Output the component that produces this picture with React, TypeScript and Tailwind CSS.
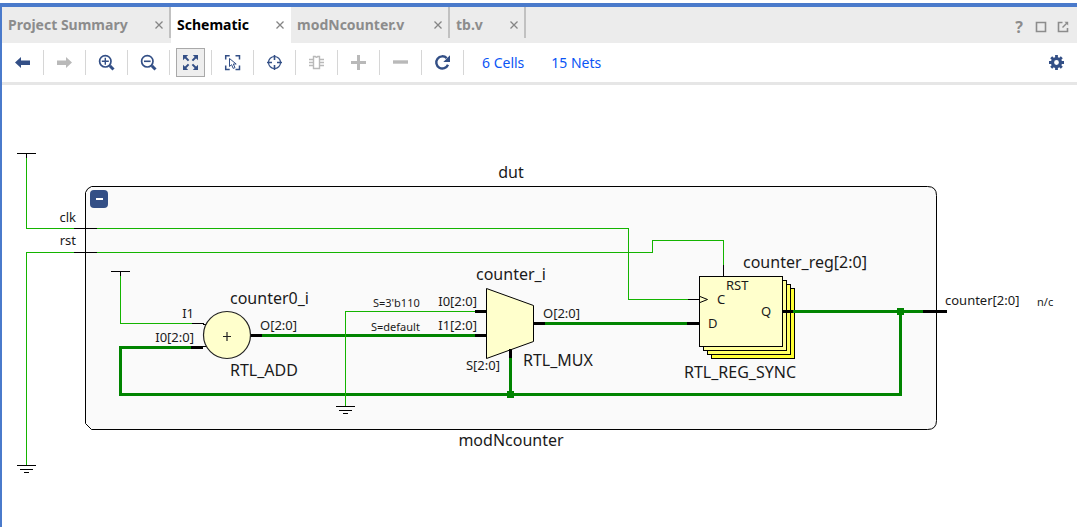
import React from "react";

const NAVY = "#334f86";
const MUTED = "#b9b9b9";

type IconProps = { children: React.ReactNode; size?: number };

function Icon({ children, size = 18 }: IconProps) {
  return (
    <svg width={size} height={size} viewBox={`0 0 ${size} ${size}`} fill="none" aria-hidden="true" className="shrink-0">
      {children}
    </svg>
  );
}

const Close = () => (
  <Icon size={8}>
    <path d="M.5.5l7 7M7.5.5l-7 7" stroke="#858585" strokeWidth="1.3" />
  </Icon>
);

function Tab({ name, active, width }: { name: string; active?: boolean; width: string }) {
  return (
    <div className={`flex shrink-0 ${width} ${active ? "bg-white" : ""}`}>
      <div className={`flex h-full min-w-0 flex-1 items-center justify-between pl-1.5 ${active ? "pr-[5px]" : "pr-[3px]"}`}>
        <button
          type="button"
          role="tab"
          aria-selected={!!active}
          className={`text-[14px] leading-5 font-bold whitespace-nowrap ${active ? "text-black" : "text-[#8c8c8c]"}`}
        >
          {name}
        </button>
        <button type="button" aria-label={`Close ${name}`} className="p-0.5">
          <Close />
        </button>
      </div>
      {!active && <div className="h-[31px] w-[3px] border-r-2 border-[#c1c1c1]" />}
    </div>
  );
}

const ArrowShape = ({ color }: { color: string }) => (
  <path d="M1 8.5L7 3V6.5H16V11H7V14Z" fill={color} />
);

const tools: { label: string; on?: boolean; off?: boolean; art: React.ReactNode }[] = [
  { label: "Back", art: <ArrowShape color={NAVY} /> },
  {
    label: "Forward",
    off: true,
    art: (
      <g transform="matrix(-1 0 0 1 17 0)">
        <ArrowShape color={MUTED} />
      </g>
    ),
  },
  {
    label: "Zoom in",
    art: (
      <g stroke={NAVY}>
        <circle cx="7.3" cy="7.3" r="5.7" strokeWidth="1.7" />
        <path d="M3.8 7.3h7M7.3 3.8v7" strokeWidth="1.4" />
        <path d="M11.8 11.8l3.7 3.7" strokeWidth="3" />
      </g>
    ),
  },
  {
    label: "Zoom out",
    art: (
      <g stroke={NAVY}>
        <circle cx="7.3" cy="7.3" r="5.7" strokeWidth="1.7" />
        <path d="M4 7.3h6.6" strokeWidth="1.6" />
        <path d="M11.8 11.8l3.7 3.7" strokeWidth="3" />
      </g>
    ),
  },
  {
    label: "Zoom fit",
    on: true,
    art: (
      <g>
        <path d="M1 1H6.2L1 6.2ZM16 1V6.2L10.8 1ZM1 16V10.8L6.2 16ZM16 16H10.8L16 10.8Z" fill={NAVY} />
        <path d="M3 3l3.6 3.6M14 3l-3.6 3.6M3 14l3.6-3.6M14 14l-3.6-3.6" stroke={NAVY} strokeWidth="2" />
      </g>
    ),
  },
  {
    label: "Select area",
    art: (
      <g stroke={NAVY}>
        <path d="M1.7 5.5V1.7h4M11.5 1.7h4v3.8M1.7 11.5v4h4M11.5 15.5h4v-4" strokeWidth="1.5" />
        <path d="M5.5 4.5v8l2.1-1.8 1.6 3.7 1.8-.8-1.7-3.6h2.9Z" strokeWidth="1" />
      </g>
    ),
  },
  {
    label: "Autofit selection",
    art: (
      <g stroke={NAVY}>
        <circle cx="8.5" cy="8.5" r="6" strokeWidth="1.2" />
        <path d="M8.5 1v5M8.5 11v5M1 8.5h5M11 8.5h5" strokeWidth="1.6" />
      </g>
    ),
  },
  {
    label: "Cell pins",
    off: true,
    art: (
      <g stroke={MUTED}>
        <path d="M5.5 2.5h1.8q1.2 1.4 2.4 0h1.8v12h-6Z" strokeWidth="1.4" />
        <path d="M1 5.5h4M1 8.5h4M1 11.5h4M12 5.5h4M12 8.5h4M12 11.5h4" strokeWidth="1.3" />
      </g>
    ),
  },
  { label: "Add", off: true, art: <path d="M1 8.5h15M8.5 1v15" stroke={MUTED} strokeWidth="3" /> },
  { label: "Remove", off: true, art: <path d="M1 8h15" stroke={MUTED} strokeWidth="3.4" /> },
  {
    label: "Refresh",
    art: (
      <g>
        <path d="M14 10.8A6.1 6.1 0 1 1 12.7 4.1" stroke={NAVY} strokeWidth="2.4" />
        <path d="M16 1.3V8H9.3Z" fill={NAVY} />
      </g>
    ),
  },
];

const thin = "#14b400";
const thick = "#008400";

const greenThin = [
  "M26.5 158V228.5H74",
  "M97 228.5H628.5V299.5H688",
  "M26.5 465V252.5H74",
  "M97 252.5H652.5V240.5H723.5V265",
  "M120.5 276V323.5H192",
  "M345.5 406V311.5H475",
];
const blackThin = [
  "M17 153.5H36M26.5 153V158",
  "M74 228.5H97M74 252.5H97",
  "M17 465.5H36M20 469.5H33M24 472.5H29",
  "M111 271.5H130M120.5 271V276",
  "M192 323.5H204M203 324.5H206M203 346.5H206",
  "M336 406.5H355M339 410.5H352M343 413.5H348",
  "M688 299.5H699M723.5 265V276",
];
const greenThick = [
  "M191 347.5H120.5V394.5H900.5V311.5",
  "M262 335.5H475",
  "M545 323.5H687",
  "M510.5 358V394",
  "M793 311.5H923",
];
const blackThick = ["M191 347.5H203", "M250 335.5H262", "M475 311.5H486M475 335.5H486", "M534 323.5H545", "M687 323.5H699"];

type Label = [x: number, y: number, text: string, size: string, anchor?: "end" | "middle"];
const big = "text-[16px]";
const small = "text-[13px]";
const tiny = "text-[11px]";

const labels: Label[] = [
  [511, 178, "dut", big, "middle"],
  [511, 446, "modNcounter", big, "middle"],
  [230, 304, "counter0_i", big],
  [230, 376, "RTL_ADD", big],
  [476, 280, "counter_i", big],
  [523, 366, "RTL_MUX", big],
  [743, 268, "counter_reg[2:0]", big],
  [684, 378, "RTL_REG_SYNC", big],
  [76, 222, "clk", small, "end"],
  [76, 245, "rst", small, "end"],
  [194, 318, "I1", small, "end"],
  [194, 342, "I0[2:0]", small, "end"],
  [260, 330, "O[2:0]", small],
  [477, 306, "I0[2:0]", small, "end"],
  [477, 330, "I1[2:0]", small, "end"],
  [500, 370, "S[2:0]", small, "end"],
  [543, 318, "O[2:0]", small],
  [726, 290, "RST", small],
  [717, 304, "C", small],
  [708, 328, "D", small],
  [761, 316, "Q", small],
  [945, 305, "counter[2:0]", small],
  [373, 307, "S=3'b110", tiny],
  [371, 331, "S=default", tiny],
  [1037, 306, "n/c", tiny],
];

function Schematic() {
  return (
    <svg width="1075" height="442" viewBox="2 85 1075 442" fill="none" role="img" aria-label="Schematic of modNcounter" className="block">
      <path
        d="M91.5 186.5H927.5Q936.5 186.5 936.5 195.5V420.5Q936.5 429.5 927.5 429.5H91.5L85.5 423.5V192.5Q87 188 91.5 186.5Z"
        fill="#fafafa"
        stroke="#000"
      />
      <g shapeRendering="crispEdges">
        <path d={greenThick.join("")} stroke={thick} strokeWidth="3" />
        <path d={greenThin.join("")} stroke={thin} />
        <path d={blackThin.join("")} stroke="#000" />
        <path d={blackThick.join("")} stroke="#000" strokeWidth="3" />
        <path d="M507 391h7v7h-7ZM897 308h7v7h-7Z" fill={thick} />
        <path d="M923 311.5H947" stroke="#000" strokeWidth="3" />
      </g>
      <circle cx="227" cy="335" r="23.5" fill="#ffffcc" stroke="#222" strokeWidth="1.2" />
      <path d="M223 336.5h8M227 332v9" stroke="#222" strokeWidth="1.2" />
      <path d="M486.5 288.5L533.5 305.5V341.5L486.5 358.5Z" fill="#ffffcc" stroke="#000" />
      <path d="M510.5 349V358" stroke="#000" strokeWidth="3" />
      <g stroke="#000" shapeRendering="crispEdges">
        <rect x="711.5" y="288.5" width="83" height="70" fill="#ffff33" />
        <rect x="707.5" y="284.5" width="83" height="70" fill="#ffff66" />
        <rect x="703.5" y="280.5" width="83" height="70" fill="#ffff99" />
        <rect x="699.5" y="276.5" width="83" height="70" fill="#ffffcc" />
        <path d="M783 311.5H793" strokeWidth="3" />
        <path d="M793 311.5H796" stroke={thick} strokeWidth="3" />
      </g>
      <path d="M700 296.5L707.5 299.5L700 302.5" stroke="#000" />
      <g fill="#1a1a1a">
        {labels.map(([x, y, text, size, anchor]) => (
          <text key={`${x}-${y}`} x={x} y={y} textAnchor={anchor} className={size}>
            {text}
          </text>
        ))}
      </g>
    </svg>
  );
}

export default function App() {
  return (
    <div className="flex min-h-screen flex-col bg-white pt-[3px] font-['Noto_Sans','Open_Sans',sans-serif]">
      <div className="flex flex-1 flex-col border-t-4 border-l-2 border-[#4a7acb]">
        <header className="flex h-9 items-stretch bg-[#ececec]">
          <div role="tablist" className="flex">
            <Tab name="Project Summary" width="w-[169px]" />
            <Tab name="Schematic" active width="w-[120px]" />
            <Tab name="modNcounter.v" width="w-[159px]" />
            <Tab name="tb.v" width="w-[76px]" />
          </div>
          <div className="ml-auto flex items-center gap-2.5 pt-1 pr-2">
            <button type="button" aria-label="Help" className="w-3 text-[16px] leading-5 font-bold text-[#8c8c8c]">
              ?
            </button>
            <button type="button" aria-label="Maximize">
              <Icon size={12}>
                <path d="M1.5 1.5h9v9h-9Z" stroke="#8c8c8c" strokeWidth="1.6" />
              </Icon>
            </button>
            <button type="button" aria-label="Float">
              <Icon size={12}>
                <path d="M5.5 1.5H1.5V10.5H10.5V7" stroke="#8c8c8c" strokeWidth="1.6" />
                <path d="M7.5.8H11.2V4.5Z" fill="#8c8c8c" />
                <path d="M5.5 6.5L10 2" stroke="#8c8c8c" strokeWidth="1.5" />
              </Icon>
            </button>
          </div>
        </header>

        <div role="toolbar" className="flex h-[42px] items-center border-b-[3px] border-[#e6e6e6]">
          {tools.map((tool) => (
            <div key={tool.label} className="flex h-[25px] w-[42px] shrink-0 items-center justify-center border-r border-[#d6d6d6]">
              <button
                type="button"
                aria-label={tool.label}
                disabled={tool.off}
                className={`flex size-[29px] shrink-0 items-center justify-center ${tool.on ? "border border-[#a9a9a9] bg-[#eeeeee]" : ""}`}
              >
                <Icon size={17}>{tool.art}</Icon>
              </button>
            </div>
          ))}
          <nav className="ml-[18px] flex gap-[27px] text-[14px] leading-5 text-[#0a55f5]">
            <a href="#cells">6 Cells</a>
            <a href="#nets">15 Nets</a>
          </nav>
          <button type="button" aria-label="Settings" className="mr-3 ml-auto">
            <Icon size={17}>
              <g stroke={NAVY}>
                <circle cx="8.5" cy="8.5" r="4" strokeWidth="3.2" />
                <path
                  d="M8.5 1v3M8.5 13v3M1 8.5h3M13 8.5h3M3.2 3.2l2 2M11.8 11.8l2 2M13.8 3.2l-2 2M5.2 11.8l-2 2"
                  strokeWidth="2.8"
                />
              </g>
            </Icon>
          </button>
        </div>

        <main className="relative flex-1 overflow-x-auto overflow-y-hidden">
          <Schematic />
          <button
            type="button"
            aria-label="Collapse dut"
            className="absolute top-[105px] left-[88px] flex size-[18px] items-center justify-center rounded bg-[#334f86]"
          >
            <span className="h-0.5 w-[7px] bg-white" />
          </button>
        </main>
      </div>
    </div>
  );
}
